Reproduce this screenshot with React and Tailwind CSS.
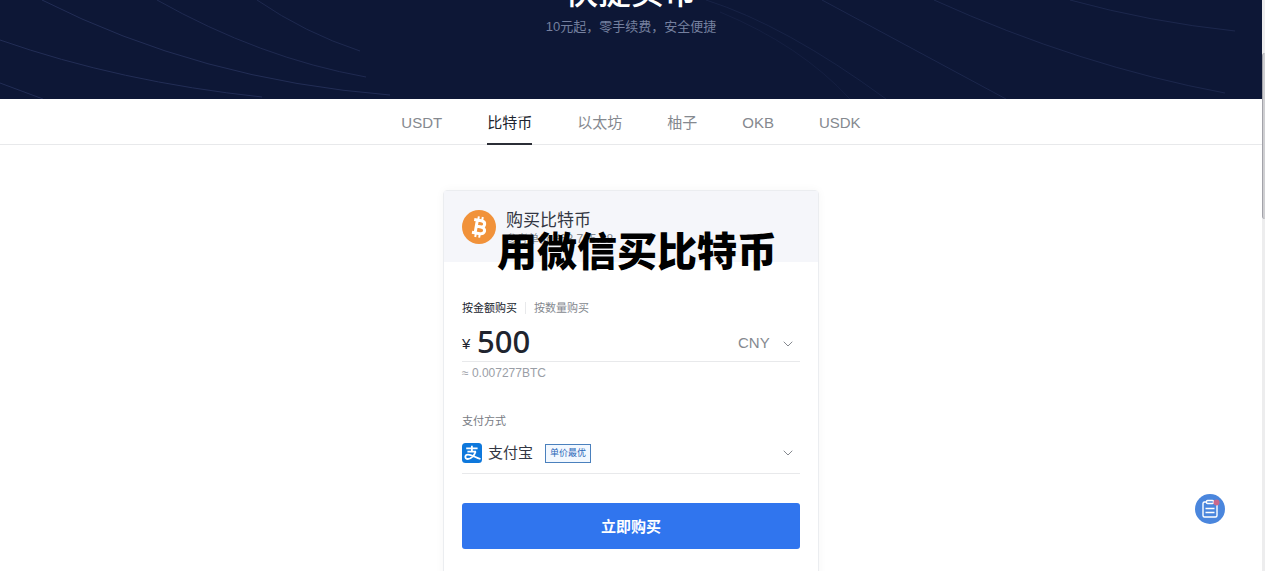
import React from 'react';
import { ChevronDown } from 'lucide-react';

const coins = ['USDT', '比特币', '以太坊', '柚子', 'OKB', 'USDK'];

function HeroLines() {
  return (
    <svg className="absolute inset-0 h-full w-full" viewBox="0 0 1262 99" preserveAspectRatio="none" fill="none" stroke="#222d55" strokeWidth="1" aria-hidden="true">
      <path d="M0 83L43 99" />
      <path d="M0 40Q120 82 262 97" />
      <path d="M42 0Q200 80 390 95" />
      <path d="M157 0Q260 58 366 77" opacity=".85" />
      <path d="M257 0Q305 33 360 51" opacity=".8" />
      <path d="M706 0Q785 25 886 99" opacity=".5" />
      <path d="M720 12Q800 45 850 99" opacity=".35" />
      <path d="M822 0L1006 99" opacity=".7" />
      <path d="M934 0Q1080 66 1225 93" opacity=".7" />
      <path d="M1070 0Q1150 22 1235 31" opacity=".7" />
    </svg>
  );
}

function BitcoinIcon() {
  return (
    <svg className="h-[34px] w-[34px] shrink-0" viewBox="0 0 34 34" aria-hidden="true">
      <circle cx="17" cy="17" r="17" fill="#f1923a" />
      <g transform="rotate(10 17 17)" fill="none" stroke="#fff">
        <path d="M11 10.5H18.2C23.4 10.5 23.4 16.6 18.2 16.6H14.2M14.2 16.6H19C24.6 16.6 24.6 23.4 19 23.4H11M14.2 10.5V23.4" strokeWidth="3" />
        <path d="M15 6.5V10M19 6.5V10M15 24V27.5M19 24V27.5" strokeWidth="2" />
      </g>
    </svg>
  );
}

function AlipayIcon() {
  return (
    <svg className="h-5 w-5 shrink-0" viewBox="0 0 20 20" aria-hidden="true">
      <rect width="20" height="20" rx="3.5" fill="#0e78dc" />
      <g fill="none" stroke="#fff" strokeWidth="1.8">
        <path d="M4.2 5.4H15.6M9.9 2.8V8.4M5.4 8.6H14" />
        <path d="M13.6 8.4C12.6 12 9 16 5.8 16C2.4 16 2.6 11.6 6 11.6C9.5 11.6 13 14.2 18.5 16" />
      </g>
    </svg>
  );
}

function OrdersIcon() {
  return (
    <svg className="h-[30px] w-[30px]" viewBox="0 0 30 30" aria-hidden="true">
      <circle cx="15" cy="15" r="15" fill="#4a86dd" />
      <g fill="none" stroke="#fff" strokeWidth="1.4">
        <path d="M11.5 8H9.5Q8 8 8 9.500V21.500Q8 23 9.500 23H20.500Q22 23 22 21.500V9.500Q22 8 20.500 8H18.500" />
        <rect x="11.500" y="6.500" width="7" height="3" rx="1" />
        <path d="M10.500 14.500H19.500M10.500 18.500H19.500" />
      </g>
      <circle cx="21.500" cy="8.500" r="3" fill="#c9688c" />
    </svg>
  );
}

export default function App() {
  return (
    <div className="flex h-screen overflow-hidden bg-white font-['Liberation_Sans','Noto_Sans_CJK_SC',sans-serif] text-[#20242e]">
      <div className="relative flex min-w-0 flex-1 flex-col">
        <header className="relative flex h-[99px] shrink-0 flex-col items-center justify-end overflow-hidden bg-[#0d1736] pb-16">
          <HeroLines />
          <h1 className="relative text-[33px] leading-9 font-medium text-white">快捷买币</h1>
          <p className="relative mt-2 text-[13px] leading-4 text-[#75809f]">10元起，零手续费，安全便捷</p>
        </header>

        <nav className="flex h-[46px] shrink-0 justify-center gap-[45px] border-b border-[#e8e9eb]" aria-label="币种">
          {coins.map((coin) => (
            <a
              key={coin}
              href="#buy"
              aria-current={coin === '比特币' ? 'page' : undefined}
              className={
                coin === '比特币'
                  ? '-mb-px flex items-center border-b-2 border-[#2b2e36] pt-1 text-[15px] text-[#20242e]'
                  : 'flex items-center pt-[3px] text-[15px] text-[#85898f]'
              }
            >
              {coin}
            </a>
          ))}
        </nav>

        <main className="flex min-h-0 flex-1 justify-center overflow-hidden pt-[45px]">
          <form id="buy" className="relative h-[420px] w-[376px] rounded-t border border-[#ebedf0] shadow-[0_0_10px_rgba(0,0,0,0.04)]">
            <div className="flex h-[71px] items-center gap-2.5 bg-[#f5f6fa] px-[18px]">
              <BitcoinIcon />
              <div className="pt-1">
                <h2 className="text-[17px] leading-5 text-[#333743]">购买比特币</h2>
                <p className="text-[11px] leading-4 text-[#85898f]">
                  参考单价 <span className="text-[12px]">¥68,705.28</span>
                </p>
              </div>
            </div>
            <strong className="absolute top-[36px] left-[53px] text-[40px] leading-[50px] font-black whitespace-nowrap text-black">用微信买比特币</strong>

            <div className="px-[18px] pt-[38px]">
              <div className="flex items-center text-[11px] leading-4">
                <button type="button">按金额购买</button>
                <span className="mx-2 h-3 w-px bg-[#e8e9eb]" />
                <button type="button" className="text-[#85898f]">按数量购买</button>
              </div>
              <div className="mt-1 flex h-[42px] items-center border-b border-[#e8e9eb]">
                <label htmlFor="amount" className="w-[15px] pt-2 text-[15px]">¥</label>
                <input id="amount" defaultValue="500" className="min-w-0 flex-1 font-['Noto_Sans',sans-serif] text-[31px] leading-10 font-medium outline-none" />
                <div className="relative flex items-center pt-1.5">
                  <select aria-label="货币" className="appearance-none pr-[30px] text-[15px] text-[#85898f] outline-none">
                    <option>CNY</option>
                  </select>
                  <ChevronDown className="pointer-events-none absolute right-1 h-4 w-4 text-[#85898f]" strokeWidth={1.5} />
                </div>
              </div>
              <p className="mt-[3px] text-[12px] leading-4 text-[#9a9ea6]">≈ 0.007277BTC</p>

              <p className="mt-8 text-[11px] leading-4 text-[#777b83]">支付方式</p>
              <button type="button" className="mt-1 flex h-[41px] w-full items-center border-b border-[#e8e9eb] pr-1">
                <AlipayIcon />
                <span className="ml-1.5 text-[15px] text-[#333743]">支付宝</span>
                <span className="ml-3 border border-[#4a80bd] bg-[#f2f8ff] px-1 text-[9px] leading-[17px] text-[#2965b8]">单价最优</span>
                <ChevronDown className="ml-auto h-4 w-4 text-[#85898f]" strokeWidth={1.5} />
              </button>

              <button type="submit" className="mt-[29px] h-[46px] w-full rounded-[3px] bg-[#3075ee] pt-0.5 text-[15px] font-bold text-white">立即购买</button>
            </div>
          </form>
        </main>

        <button type="button" aria-label="订单" className="absolute right-[37px] bottom-[47px]">
          <OrdersIcon />
        </button>
      </div>
      <div className="flex w-[3px] shrink-0 flex-col bg-[#ededee] pt-[53px]">
        <div className="h-[166px] rounded-l-sm border-l border-[#a3a3aa] bg-[#cfcfd2]" />
      </div>
    </div>
  );
}
